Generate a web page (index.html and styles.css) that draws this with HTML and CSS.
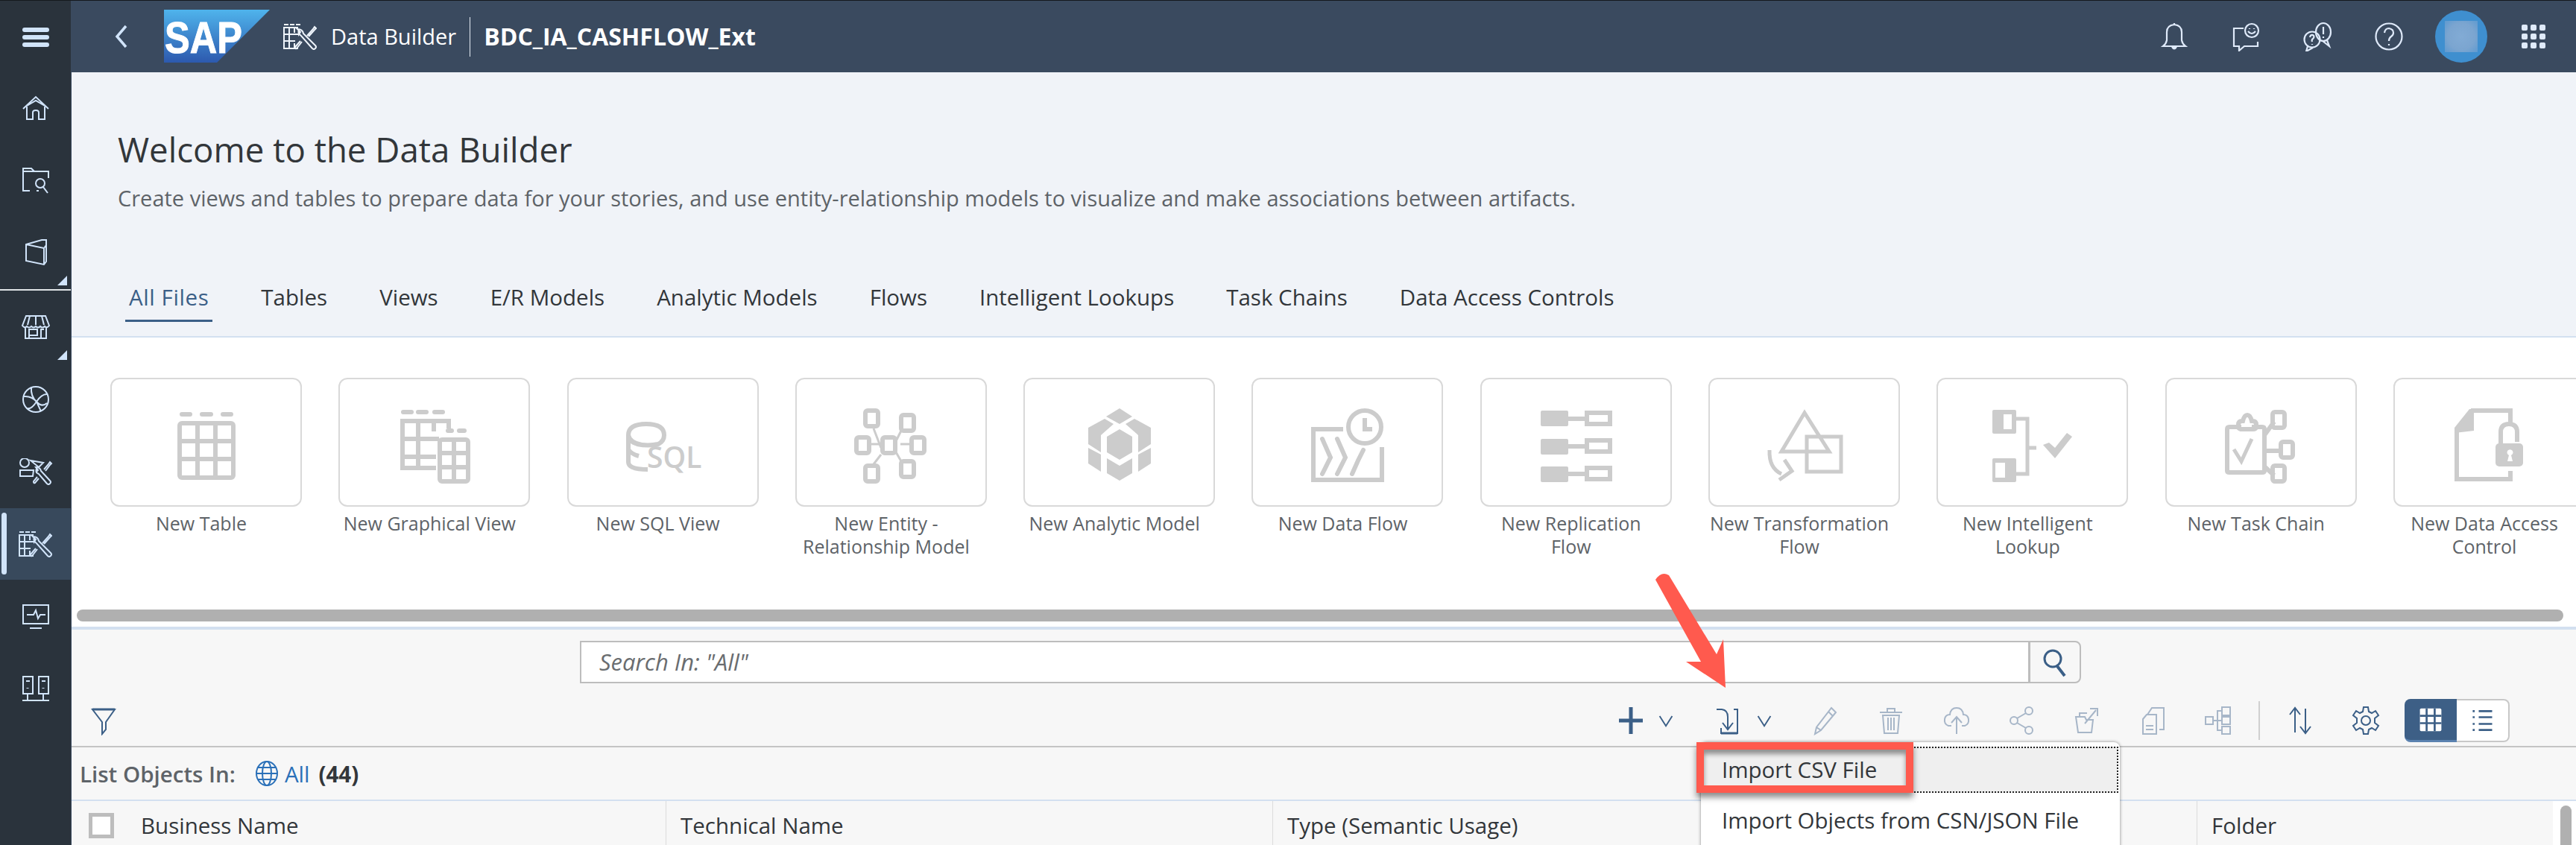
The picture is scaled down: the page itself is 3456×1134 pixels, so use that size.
FILE: index.html
```html
<!DOCTYPE html>
<html lang="en">
<head>
<meta charset="utf-8">
<title>Data Builder</title>
<link rel="stylesheet" href="styles.css">
</head>
<body>
<svg class="defs" width="0" height="0">
  <defs>
    <symbol id="builder" viewBox="0 0 45 35">
      <path d="M1 1h6M9 1h6M17 1h6M20 5H1v28h19M1 14h19M1 23h15M8 5v28M15 5v7M15 26v7" fill="none" stroke="currentColor" stroke-width="2"/>
      <path d="M21 8q-2 5 3 8l15 17q2 2 4 0t0-4L27 13q-1-6-8-6l4 4-2 3zM25 24l-7 9q-2 1-2-2l7-8M32 16l8-9 2-3 2 2-2 2-8 9" fill="none" stroke="currentColor" stroke-width="2"/>
    </symbol>
  </defs>
</svg>
<div class="app">
  <nav class="sidebar">
    <div class="side-item side-head">
      <svg class="ico" viewBox="0 0 40 40"><path d="M5 11h30M5 21h30M5 31h30" stroke-width="6" stroke-linecap="round"/></svg>
    </div>
    <div class="side-item">
      <svg class="ico" viewBox="0 0 40 40"><path d="M3 21 20 5l17 16M8 18v17h8v-9q0-3 4-3t4 3v9h8V18M8 17 20 10l12 7"/></svg>
    </div>
    <div class="side-item">
      <svg class="ico" viewBox="0 0 40 40"><path d="M12 34H3V4h11l4 4h19v9M3 8h15"/><circle cx="26" cy="24" r="6"/><path d="m30 29 6 8M24 34h-3"/></svg>
    </div>
    <div class="side-item has-more">
      <svg class="ico" viewBox="0 0 40 40"><path d="M7 9 28 3h6v29l-3 4L7 31zM7 9l24 5v22M31 14l3-4"/></svg>
    </div>
    <div class="side-sep"></div>
    <div class="side-item has-more">
      <svg class="ico" viewBox="0 0 40 40"><path d="M7 5h26l5 13q-3 4-6 1-3 3-6 0-3 3-6 0-3 3-6 0-3 3-6 0-3 3-6-1zM12 5l-3 12M20 5v12M28 5l3 12M6 20v15h28V20M11 35V23h11v8H11M27 35V23h4"/></svg>
    </div>
    <div class="side-item">
      <svg class="ico" viewBox="0 0 40 40"><circle cx="20" cy="20" r="17"/><path d="M4 16q10-1 17 7t14 2M14 4q-1 12 7 19l6 13M36 13q-8-1-15 10T8 32"/></svg>
    </div>
    <div class="side-item">
      <svg class="ico ico-wide" viewBox="0 0 46 36"><circle cx="8" cy="6" r="6"/><path d="M2 16h18l-1 8H2zM16 3l17 3-6 6zM24 14q-2 5 3 7l11 13q2 2 4 0t0-4L30 17q-1-5-7-5l3 4-2 2zM27 27l-5 6q-2 1-2-2l5-6M34 15l6-7 2-3 2 2-2 2-6 8"/></svg>
    </div>
    <div class="side-item active">
      <span class="side-mark"></span>
      <svg class="ico-builder"><use href="#builder"/></svg>
    </div>
    <div class="side-item">
      <svg class="ico" viewBox="0 0 40 40"><path d="M3 5h34v25H3zM12 36h16M8 18h9l3-6 3 11 3-5h7"/></svg>
    </div>
    <div class="side-item">
      <svg class="ico" viewBox="0 0 40 40"><path d="M3 4h13v23H3zM24 4h13v23H24zM7 10h5M28 10h5M2 36h36M9 27v9M30 27v9"/><path d="M9 19v1M30 19v1" stroke-width="3"/></svg>
    </div>
  </nav>

  <div class="main">
    <header class="shell">
      <svg class="chev-back" viewBox="0 0 20 32"><path d="M16 2 4 16l12 14"/></svg>
      <svg class="sap-logo" viewBox="0 0 142 71">
        <defs><linearGradient id="sapg" x1="0" y1="0" x2="0" y2="1"><stop offset="0" stop-color="#4fb4ec"/><stop offset="1" stop-color="#2d59ae"/></linearGradient></defs>
        <polygon points="0,0 142,0 71,71 0,71" fill="url(#sapg)"/>
        <text x="1" y="58" class="sap-text" textLength="104" lengthAdjust="spacingAndGlyphs">SAP</text>
      </svg>
      <svg class="shell-icon"><use href="#builder"/></svg>
      <span class="shell-app">Data Builder</span>
      <span class="shell-div"></span>
      <span class="shell-title">BDC_IA_CASHFLOW_Ext</span>
      <div class="shell-right">
        <svg class="sh-ico" viewBox="0 0 40 40"><path d="M5 33q4-3 5-8V14q0-9 10-10 10 1 10 10v11q1 5 5 8zM20 4V2"/><path d="M17 34q3 5 6 0" fill="currentColor"/></svg>
        <svg class="sh-ico" viewBox="0 0 40 40"><path d="M17 9H4v24h7v6l7-6h18v-6"/><circle cx="28" cy="12" r="9"/><path d="M23 13q5 6 10 0M25 9v1M31 9v1"/></svg>
        <svg class="sh-ico" viewBox="0 0 40 40"><ellipse cx="28" cy="14" rx="10" ry="12"/><path d="M33 25l3 8-9-7M28 7v10M28 20v2"/><circle cx="13" cy="24" r="10.500"/><path d="M7 33l-2 7 9-5M10 21q1-4 4-3 3 2 0 5-2 1-1 4M13 30v1"/></svg>
        <svg class="sh-ico" viewBox="0 0 40 40"><circle cx="20" cy="20" r="17.500"/><path d="M14 15q1-6 6-6 6 1 6 6 0 3-3 5-3 2-3 6M20 30v2"/></svg>
        <div class="avatar"><span class="avatar-blur"></span></div>
        <div class="waffle"><i></i><i></i><i></i><i></i><i></i><i></i><i></i><i></i><i></i></div>
      </div>
    </header>

    <section class="hero">
      <h1 class="hero-title">Welcome to the Data Builder</h1>
      <p class="hero-sub">Create views and tables to prepare data for your stories, and use entity-relationship models to visualize and make associations between artifacts.</p>
      <div class="tabs">
        <span class="tab selected">All Files</span>
        <span class="tab">Tables</span>
        <span class="tab">Views</span>
        <span class="tab">E/R Models</span>
        <span class="tab">Analytic Models</span>
        <span class="tab">Flows</span>
        <span class="tab">Intelligent Lookups</span>
        <span class="tab">Task Chains</span>
        <span class="tab">Data Access Controls</span>
      </div>
    </section>

    <section class="gallery">
      <div class="tile-row">
        <div class="tile-wrap">
          <div class="tile"><svg class="tile-ico" viewBox="0 0 100 100"><path d="M17 8h11M44 8h12M72 8h11" class="thick" stroke-width="6" stroke-linecap="round"/><rect x="14" y="20" width="72" height="73" rx="3" class="thick"/><path d="M14 44h72M14 68h72M38 20v73M62 20v73" class="thick"/></svg></div>
          <div class="tile-label">New Table</div>
        </div>
        <div class="tile-wrap">
          <div class="tile"><svg class="tile-ico" viewBox="0 0 100 100"><path d="M8 5h11M28 5h11M50 5h11M68 30h5M83 30h7" class="thick" stroke-width="6" stroke-linecap="round"/><path d="M52 80H7V17h62v10M7 41h49M7 65h45M28 17v63M49 17v14" class="thick"/><rect x="57" y="42" width="38" height="56" rx="3" class="thick"/><path d="M57 60h38M57 79h38M76 42v56" class="thick"/></svg></div>
          <div class="tile-label">New Graphical View</div>
        </div>
        <div class="tile-wrap">
          <div class="tile"><svg class="tile-ico" viewBox="0 0 100 100"><path d="M4 36v36q0 10 26 10M4 36q0-15 24-15t24 15q0 8-8 12-14 3-28 0-12-4-12-12M4 36q2 10 18 13M4 55q3 6 14 9" class="thick"/><text x="29" y="80" class="sql-text">SQL</text></svg></div>
          <div class="tile-label">New SQL View</div>
        </div>
        <div class="tile-wrap">
          <div class="tile"><svg class="tile-ico" viewBox="0 0 100 100"><path d="M27 27l10 26M37 62 27 75M22 48H37M63 48h16M64 30l-8 16M64 71l-8-14" class="thin"/><rect x="16" y="3" width="17" height="21" rx="3" class="thick"/><rect x="4" y="39" width="17" height="21" rx="3" class="thick"/><rect x="39" y="39" width="17" height="21" rx="3" class="thick"/><rect x="78" y="39" width="17" height="21" rx="3" class="thick"/><rect x="16" y="77" width="17" height="21" rx="3" class="thick"/><rect x="64" y="9" width="17" height="21" rx="3" class="thick"/><rect x="64" y="71" width="17" height="21" rx="3" class="thick"/></svg></div>
          <div class="tile-label">New Entity - Relationship Model</div>
        </div>
        <div class="tile-wrap">
          <div class="tile"><svg class="tile-ico" viewBox="0 0 100 100"><g class="solid"><polygon points="50,0 67,11 50,21 32,11"/><polygon points="8,26 30,14 42,21 25,36 25,59 8,48"/><polygon points="92,26 70,14 58,21 75,36 75,59 92,48"/><polygon points="50,28 67,38 67,59 50,69 33,59 33,38"/><polygon points="8,53 25,62 25,85 8,74"/><polygon points="92,53 75,62 75,85 92,74"/><polygon points="33,67 50,77 67,67 67,87 50,97 33,87"/></g></svg></div>
          <div class="tile-label">New Analytic Model</div>
        </div>
        <div class="tile-wrap">
          <div class="tile"><svg class="tile-ico" viewBox="0 0 100 100"><path d="M44 28H4v68h92V52" class="thick"/><path d="M16 41l11 25-11 22M36 41l11 25-11 22M71 56l-7 14-8 18" class="thick" stroke-linecap="round"/><circle cx="73" cy="25" r="22" class="thick"/><path d="M73 13v15h10" class="thick"/></svg></div>
          <div class="tile-label">New Data Flow</div>
        </div>
        <div class="tile-wrap">
          <div class="tile"><svg class="tile-ico" viewBox="0 0 100 100"><g class="solid"><rect x="3" y="3" width="37" height="21" rx="2"/><rect x="3" y="41" width="37" height="21" rx="2"/><rect x="3" y="78" width="37" height="21" rx="2"/></g><path d="M40 14h25M40 51h25M40 88h25" class="thick"/><rect x="65" y="6" width="31" height="15" class="thick"/><rect x="65" y="43" width="31" height="15" class="thick"/><rect x="65" y="80" width="31" height="15" class="thick"/></svg></div>
          <div class="tile-label">New Replication Flow</div>
        </div>
        <div class="tile-wrap">
          <div class="tile"><svg class="tile-ico" viewBox="0 0 100 100"><path d="M50 6 19 58h64zM53 38h46v47H53zM3 56q-1 24 16 32M23 69l10 15-17 12" class="thin-b"/></svg></div>
          <div class="tile-label">New Transformation Flow</div>
        </div>
        <div class="tile-wrap">
          <div class="tile"><svg class="tile-ico" viewBox="0 0 100 100"><g class="solid"><rect x="-4" y="2" width="32" height="32" rx="2"/><rect x="-4" y="67" width="32" height="32" rx="2"/><polygon points="64,49 72,46 80,53 96,33 103,38 80,67"/></g><rect x="11" y="8" width="11" height="20" fill="#fff"/><rect x="0" y="73" width="13" height="20" fill="#fff"/><path d="M28 14h15v74H28M43 53h12" class="thin-b"/></svg></div>
          <div class="tile-label">New Intelligent Lookup</div>
        </div>
        <div class="tile-wrap">
          <div class="tile"><svg class="tile-ico" viewBox="0 0 100 100"><path d="M24 25H8q-3 0-3 3v56q0 2 3 2h44q3 0 3-2V28q0-3-3-3H38" class="thick"/><path d="M20 25V22q0-5 5-5h1q2-8 6-8t6 8h1q5 0 5 5v4q-1 2-4 2H23q-3-1-3-3z" class="thick"/><path d="M14 55l10 16 14-30" class="thin-b"/><path d="M55 36 68 18M56 57h21M55 78l13 12" class="thick"/><rect x="66" y="5" width="16" height="21" rx="3" class="thick"/><rect x="77" y="45" width="16" height="21" rx="3" class="thick"/><rect x="66" y="77" width="16" height="21" rx="3" class="thick"/></svg></div>
          <div class="tile-label">New Task Chain</div>
        </div>
        <div class="tile-wrap">
          <div class="tile"><svg class="tile-ico" viewBox="0 0 100 100"><path d="M26 3h53v19M79 84v11H7V30" class="thick"/><polygon class="solid" points="24,1 30,1 30,30 4,33 4,26"/><path d="M66 47V32q0-11 11-11t11 11v13" class="thick"/><rect x="59" y="47" width="37" height="31" rx="5" class="solid"/><path d="M75 71l2-8a4 4 0 1 1 3 0l2 8z" fill="#fff"/></svg></div>
          <div class="tile-label">New Data Access Control</div>
        </div>
      </div>
      <div class="hscroll"></div>
    </section>

    <section class="lower">
      <div class="search-row">
        <div class="search-input">Search In: "All"</div>
        <div class="search-btn"><svg viewBox="0 0 40 40"><circle cx="17" cy="15" r="11"/><path d="m23 25 10 13" stroke-width="4"/></svg></div>
      </div>
      <div class="toolbar">
        <svg class="tb-filter" viewBox="0 0 40 40"><path d="M5 5h30L23 22v10l-5 6V22z"/><path d="M5 5h30" stroke-width="3"/></svg>
        <div class="tb-group">
          <svg class="tb-main" viewBox="0 0 40 40"><path d="M20 2v36M4 20h32" stroke-width="5"/></svg>
          <svg class="tb-chev" viewBox="0 0 20 20"><path d="m3 5 7 11 7-11"/></svg>
        </div>
        <div class="tb-group">
          <svg class="tb-main" viewBox="0 0 40 40"><path d="M3 5h7q8 1 8 10v16M11 23l7 9 7-9M26 5h5v32H9v-7"/><path d="M9 37h22" stroke-width="3"/></svg>
          <svg class="tb-chev" viewBox="0 0 20 20"><path d="m3 5 7 11 7-11"/></svg>
        </div>
        <div class="tb-btn off"><svg viewBox="0 0 40 40"><path d="m28 3 6 6-20 24-8 5 2-9zM24 8l6 6M8 29l6 4"/></svg></div>
        <div class="tb-btn off"><svg viewBox="0 0 40 40"><path d="M5 9h30M15 9V4h10v5M9 13l2 24h18l2-24zM16 16v17M20 16v17M24 16v17"/></svg></div>
        <div class="tb-btn off"><svg viewBox="0 0 40 40"><path d="M13 27H9q-6-2-5-9 1-6 7-6 1-9 9-9t9 9q6 0 7 6 1 7-5 9h-4M20 38V16M13 23l7-8 7 8"/></svg></div>
        <div class="tb-btn off"><svg viewBox="0 0 40 40"><circle cx="29" cy="7" r="5"/><circle cx="9" cy="20" r="5"/><circle cx="29" cy="33" r="5"/><path d="M25 10 13 17M13 23l12 7"/></svg></div>
        <div class="tb-btn off"><svg viewBox="0 0 40 40"><path d="M4 15h12l2 4h9l-2 17H7zM16 24 31 6M23 4h10v10M19 10H9v5"/></svg></div>
        <div class="tb-btn off"><svg viewBox="0 0 40 40"><path d="M12 12 18 3h16v29h-6M6 18l5-6h13v26H6zM10 27h10M10 32h10"/></svg></div>
        <div class="tb-btn off"><svg viewBox="0 0 40 40"><rect x="2" y="15" width="10" height="10"/><rect x="24" y="2" width="11" height="11"/><rect x="24" y="15" width="11" height="10"/><rect x="24" y="28" width="11" height="10"/><path d="M12 20h12M18 20V7h6M18 20v13h6"/></svg></div>
        <span class="tb-sep"></span>
        <div class="tb-btn"><svg viewBox="0 0 40 40"><path d="M13 36V3M6 12l7-9 7 9M27 4v33M20 28l7 9 7-9"/></svg></div>
        <div class="tb-btn"><svg viewBox="0 0 40 40"><circle cx="20" cy="20" r="6"/><path d="m17 2h6l1 6 4 2 5-3 4 6-5 4v6l5 4-4 6-5-3-4 2-1 6h-6l-1-6-4-2-5 3-4-6 5-4v-6l-5-4 4-6 5 3 4-2z"/></svg></div>
        <div class="segment">
          <div class="seg seg-on"><svg viewBox="0 0 40 40"><rect x="4" y="3" width="32" height="34" rx="2" fill="#fff"/><path d="M14 3v34M26 3v34M4 14h32M4 25h32" stroke="#3d5f86" stroke-width="3"/></svg></div>
          <div class="seg"><svg viewBox="0 0 40 40"><path d="M15 6h20M15 15h20M15 25h20M15 34h20" stroke-width="3"/><path d="M6 6h3M6 15h3M6 25h3M6 34h3" stroke-width="3"/></svg></div>
        </div>
      </div>
      <div class="crumb">
        <span class="crumb-label">List Objects In:</span>
        <svg class="globe" viewBox="0 0 30 36"><ellipse cx="15" cy="18" rx="14" ry="16"/><ellipse cx="15" cy="18" rx="6" ry="16"/><path d="M1 18h28M3 10h24M3 26h24"/></svg>
        <span class="crumb-link">All</span>
        <span class="crumb-count">(44)</span>
      </div>
      <div class="thead">
        <div class="th th-name"><span class="check"></span>Business Name</div>
        <div class="th th-tech">Technical Name</div>
        <div class="th th-type">Type (Semantic Usage)</div>
        <div class="th th-fill"></div>
        <div class="th th-folder">Folder</div>
        <div class="vscroll"><span></span></div>
      </div>
      <div class="menu">
        <div class="menu-item focus">Import CSV File</div>
        <div class="menu-item">Import Objects from CSN/JSON File</div>
      </div>
    </section>
  </div>
</div>
<div class="callout-box"></div>
<svg class="callout-arrow" viewBox="0 0 200 180"><path d="M21 28Q29 16 39 22L103 128 112 108 115 173 62 138 82 138Z" fill="#ff5a4e"/></svg>
</body>
</html>
```

FILE: styles.css
```css
* { box-sizing: border-box; }
html, body { margin: 0; padding: 0; }
body {
  width: 3456px;
  height: 1134px;
  overflow: hidden;
  position: relative;
  font-family: "Open Sans", "Noto Sans", sans-serif;
  background: #f7f7f7;
  color: #32363a;
}
.defs { position: absolute; }
.app {
  display: flex;
  height: 1134px;
  border-top: 1px solid #15191d;
}

/* sidebar */
.sidebar {
  width: 96px;
  flex: none;
  background: #2a333c;
  border-right: 1px solid #3a4a5f;
  color: #d1e4fa;
  display: flex;
  flex-direction: column;
  gap: 1px;
  height: 100%;
}
.side-item {
  position: relative;
  height: 96px;
  flex: none;
  display: flex;
  align-items: center;
  justify-content: center;
}
.side-head { height: 95px; }
.side-sep { height: 2px; background: #dfe3e6; flex: none; }
.ico { width: 40px; height: 40px; fill: none; stroke: #d1e4fa; stroke-width: 2; }
.ico-wide { width: 46px; height: 36px; margin-left: 0; }
.ico-builder { width: 45px; height: 35px; color: #d1e4fa; }
.side-item.has-more::after {
  content: "";
  position: absolute;
  right: 5px;
  bottom: 4px;
  border-style: solid;
  border-width: 0 0 13px 13px;
  border-color: transparent transparent #d1e4fa transparent;
}
.side-item.active { background: #38495c; }
.side-mark {
  position: absolute;
  left: 2px;
  top: 6px;
  bottom: 7px;
  width: 7px;
  border-radius: 4px;
  background: #d1e4fa;
}

/* main */
.main { flex: 1; min-width: 0; display: flex; flex-direction: column; }
.shell {
  height: 96px;
  flex: none;
  background: #3a4a5f;
  color: #fff;
  display: flex;
  align-items: center;
  padding-left: 57px;
}
.chev-back { width: 20px; height: 32px; fill: none; stroke: #d1e4fa; stroke-width: 3.500; margin-right: 47px; }
.sap-logo { width: 142px; height: 71px; flex: none; margin-right: 18px; margin-top: -1px; }
.sap-text { font-family: "Liberation Sans", sans-serif; font-weight: 700; font-size: 60px; fill: #fff; stroke: #fff; stroke-width: 1; }
.shell-icon { width: 45px; height: 35px; color: #eef4fb; margin-right: 19px; }
.shell-app { font-size: 29px; line-height: 40px; margin-right: 18px; }
.shell-div { width: 1px; height: 53px; background: #e6edf5; margin-right: 18px; }
.shell-title { font-size: 32px; font-weight: 700; line-height: 40px; }
.shell-right {
  margin-left: auto;
  display: flex;
  align-items: center;
  padding-right: 41px;
}
.sh-ico { width: 40px; height: 40px; fill: none; stroke: #dfeafa; stroke-width: 2.200; color: #dfeafa; margin-right: 56px; }
.avatar {
  width: 70px;
  height: 70px;
  border-radius: 50%;
  background: #3f8fcf;
  display: flex;
  align-items: center;
  justify-content: center;
  margin-left: -14px;
  margin-right: 46px;
}
.avatar-blur {
  width: 44px;
  height: 42px;
  background: radial-gradient(circle, #82abd5 0%, #7ba5d0 60%, #5f9ad0 100%);
}
.waffle {
  width: 32px;
  display: grid;
  grid-template-columns: repeat(3, 8px);
  grid-auto-rows: 8px;
  gap: 4px;
}
.waffle i { background: #dfeafa; border-radius: 2px; }

/* hero */
.hero {
  height: 356px;
  flex: none;
  background: #f0f3f8;
  padding: 76px 0 0 62px;
  border-bottom: 2px solid #d3e0f0;
  display: flex;
  flex-direction: column;
}
.hero-title { margin: 0; font-size: 45.600px; font-weight: 400; line-height: 54px; color: #32363a; }
.hero-sub { margin: 21px 0 0; font-size: 29px; line-height: 36px; color: #5e6368; }
.tabs {
  display: flex;
  gap: 70px;
  margin: 98px 0 0 15px;
  font-size: 29.500px;
  line-height: 34px;
  color: #32363a;
}
.tab { position: relative; }
.tab.selected { color: #3b5f87; letter-spacing: 0.600px; }
.tab.selected::after {
  content: "";
  position: absolute;
  left: -5px;
  right: -5px;
  top: 47px;
  height: 3px;
  background: #3b5f87;
}

/* gallery */
.gallery {
  height: 388px;
  flex: none;
  background: #fff;
  padding: 54px 0 0 52px;
  overflow: hidden;
  display: flex;
  flex-direction: column;
}
.tile-row { display: flex; gap: 49.300px; height: 311px; flex: none; }
.tile-wrap { width: 257px; flex: none; }
.tile {
  height: 173px;
  border: 2px solid #d9d9d9;
  border-radius: 12px;
  background: #fff;
  display: flex;
  justify-content: center;
  padding-top: 39px;
}
.tile-ico { width: 100px; height: 100px; flex: none; overflow: visible; }
.thick { fill: none; stroke: #cccccc; stroke-width: 6; }
.thin { fill: none; stroke: #cccccc; stroke-width: 3; }
.thin-b { fill: none; stroke: #cccccc; stroke-width: 5; }
.solid, .solid polygon, .solid rect { fill: #cccccc; }
.sql-text { font-size: 39px; fill: #cccccc; font-family: "Open Sans", sans-serif; font-weight: 600; }
.tile-label {
  margin-top: 7px;
  padding: 0 13px 0 0;
  text-align: center;
  font-size: 25px;
  line-height: 31px;
  color: #5e6368;
}
.hscroll {
  height: 16px;
  flex: none;
  margin: 0 17px 0 -45px;
  background: #b0b0b0;
  border-radius: 8px;
}

/* lower */
.lower {
  position: relative;
  flex: 1;
  min-height: 0;
  background: #f7f7f7;
  border-top: 4px solid #d3e0f0;
  overflow: hidden;
}
.search-row {
  display: flex;
  margin: 15px 0 0 682px;
  height: 57px;
}
.search-input {
  width: 1945px;
  background: #fff;
  border: 2px solid #bdbdbd;
  padding-left: 24px;
  font-style: italic;
  font-size: 31px;
  line-height: 53px;
  color: #6a6d70;
}
.search-btn {
  width: 69px;
  border: 2px solid #bdbdbd;
  border-left-width: 1px;
  border-radius: 0 8px 8px 0;
  display: flex;
  align-items: center;
  justify-content: center;
}
.search-btn svg, .tb-btn svg, .tb-main, .tb-filter, .seg svg {
  fill: none;
  stroke: #3b5f87;
  stroke-width: 2;
}
.search-btn svg { width: 40px; height: 40px; stroke-width: 3; }
.toolbar {
  display: flex;
  align-items: center;
  height: 58px;
  margin-top: 21px;
  padding-right: 89px;
  position: relative;
}
.tb-filter { width: 40px; height: 40px; margin-left: 23px; margin-right: auto; }
.tb-group { width: 132px; height: 58px; display: flex; align-items: center; padding-left: 27px; flex: none; }
.tb-main { width: 40px; height: 40px; flex: none; }
.tb-chev { width: 24px; height: 24px; margin-left: 15px; fill: none; stroke: #3b5f87; stroke-width: 1.600; flex: none; }
.tb-btn { width: 88px; height: 58px; display: flex; align-items: center; justify-content: center; flex: none; }
.tb-btn svg { width: 40px; height: 40px; }
.tb-btn.off svg { stroke: #a7b6c8; }
.tb-sep { width: 2px; height: 52px; background: #d0d0d0; margin: 0 10px 0 9px; flex: none; }
.segment {
  display: flex;
  width: 141px;
  height: 58px;
  margin-left: 8px;
  flex: none;
}
.seg {
  flex: 1;
  display: flex;
  align-items: center;
  justify-content: center;
  background: #fff;
  border: 2px solid #c8c8c8;
  border-left: none;
  border-radius: 0 8px 8px 0;
}
.seg svg { width: 36px; height: 36px; }
.seg-on {
  background: #3d5f86;
  border: none;
  border-bottom: 3px solid #5b82b0;
  border-radius: 8px 0 0 8px;
}
.seg-on svg { stroke: none; }
.crumb {
  height: 74px;
  margin-top: 5px;
  border-top: 2px solid #c4c4c4;
  border-bottom: 2px solid #d3e0f0;
  padding-left: 11px;
  display: flex;
  align-items: center;
  font-size: 29.500px;
}
.crumb-label { font-weight: 600; color: #5e6368; margin-right: 27px; }
.globe { width: 30px; height: 36px; fill: none; stroke: #2a70b8; stroke-width: 2; margin-right: 9px; }
.crumb-link { color: #2a70b8; margin-right: 12px; }
.crumb-count { font-weight: 700; color: #32363a; }
.thead {
  display: flex;
  height: 59px;
  font-size: 29.500px;
  color: #32363a;
}
.th {
  height: 100%;
  display: flex;
  align-items: center;
  padding-left: 19px;
  padding-top: 6px;
  border-right: 1px solid #dcdcdc;
  flex: none;
}
.th-name { width: 798px; padding-left: 23px; }
.th-tech { width: 814px; }
.th-type { width: 800px; }
.th-fill { width: 440px; }
.th-folder { width: 477px; border-right: none; }
.check {
  width: 34px;
  height: 34px;
  background: #fff;
  border: 5px solid #bdbdbd;
  margin-right: 36px;
  flex: none;
}
.vscroll {
  flex: 1;
  background: #fff;
  position: relative;
}
.vscroll span {
  position: absolute;
  left: 10px;
  top: 6px;
  width: 15px;
  height: 70px;
  background: #b0b0b0;
  border-radius: 8px;
}

/* dropdown menu */
.menu {
  position: absolute;
  left: 2186px;
  top: 151px;
  width: 562px;
  height: 200px;
  background: #fff;
  border-radius: 8px;
  box-shadow: 0 0 4px rgba(0, 0, 0, 0.45);
  padding: 6px 2px 0;
  font-size: 29.500px;
  color: #32363a;
}
.menu-item {
  height: 62px;
  line-height: 58px;
  padding-left: 26px;
  margin-bottom: 8px;
}
.menu-item.focus {
  background: #efefef;
  border: 2px dotted #222;
  padding-left: 24px;
}

/* annotation */
.callout-box {
  position: absolute;
  left: 2276px;
  top: 996px;
  width: 291px;
  height: 68px;
  border: 10px solid #ff5a4e;
  box-shadow: 0 6px 8px rgba(0, 0, 0, 0.45), inset 0 6px 6px rgba(0, 0, 0, 0.4);
}
.callout-arrow {
  position: absolute;
  left: 2200px;
  top: 750px;
  width: 200px;
  height: 180px;
}
```
